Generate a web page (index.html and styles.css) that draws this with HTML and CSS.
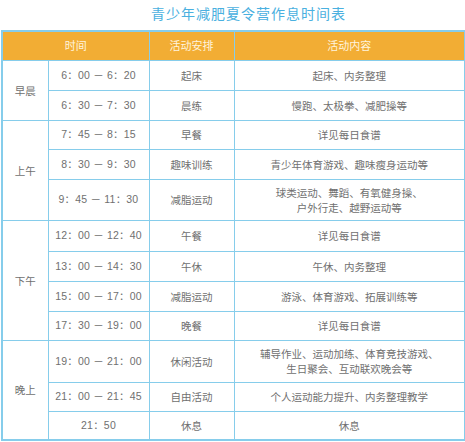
FILE: index.html
```html
<!DOCTYPE html>
<html lang="zh">
<head>
<meta charset="utf-8">
<link rel="stylesheet" href="styles.css">
</head>
<body>
<div class="page">
  <h1 class="title">青少年减肥夏令营作息时间表</h1>
  <table class="sched">
    <colgroup>
      <col class="c1"><col class="c2"><col class="c3"><col class="c4">
    </colgroup>
    <thead>
      <tr class="h"><th colspan="2">时间</th><th>活动安排</th><th>活动内容</th></tr>
    </thead>
    <tbody>
      <tr class="r30"><td rowspan="2" class="period">早晨</td><td class="time">6：00 － 6：20</td><td>起床</td><td>起床、内务整理</td></tr>
      <tr class="r30"><td class="time">6：30 － 7：30</td><td>晨练</td><td>慢跑、太极拳、减肥操等</td></tr>
      <tr class="r29"><td rowspan="3" class="period">上午</td><td class="time">7：45 － 8：15</td><td>早餐</td><td>详见每日食谱</td></tr>
      <tr class="r30"><td class="time">8：30 － 9：30</td><td>趣味训练</td><td>青少年体育游戏、趣味瘦身运动等</td></tr>
      <tr class="r41"><td class="time">9：45 － 11：30</td><td>减脂运动</td><td>球类运动、舞蹈、有氧健身操、<br>户外行走、越野运动等</td></tr>
      <tr class="r31"><td rowspan="4" class="period">下午</td><td class="time">12：00 － 12：40</td><td>午餐</td><td>详见每日食谱</td></tr>
      <tr class="r30"><td class="time">13：00 － 14：30</td><td>午休</td><td>午休、内务整理</td></tr>
      <tr class="r30"><td class="time">15：00 － 17：00</td><td>减脂运动</td><td>游泳、体育游戏、拓展训练等</td></tr>
      <tr class="r29"><td class="time">17：30 － 19：00</td><td>晚餐</td><td>详见每日食谱</td></tr>
      <tr class="r42"><td rowspan="3" class="period">晚上</td><td class="time">19：00 － 21：00</td><td>休闲活动</td><td>辅导作业、运动加练、体育竞技游戏、<br>生日聚会、互动联欢晚会等</td></tr>
      <tr class="r29"><td class="time">21：00 － 21：45</td><td>自由活动</td><td>个人运动能力提升、内务整理教学</td></tr>
      <tr class="r29"><td class="time">21：50</td><td>休息</td><td>休息</td></tr>
    </tbody>
  </table>
</div>
</body>
</html>
```

FILE: styles.css
```css
html, body {
  margin: 0;
  padding: 0;
  background: #ffffff;
}
.page {
  width: 465px;
  font-family: "Noto Sans CJK SC", "Noto Sans", sans-serif;
}
.title {
  margin: 0;
  padding-left: 32px;
  height: 30px;
  line-height: 26px;
  text-align: center;
  font-size: 14px;
  font-weight: 400;
  letter-spacing: 1px;
  color: #4ab0e0;
}
.sched {
  margin-left: 1px;
  width: 463px;
  border-collapse: collapse;
  table-layout: fixed;
  border: 2px solid #86cdeb;
}
.c1 { width: 46px; }
.c2 { width: 101px; }
.c3 { width: 85px; }
.c4 { width: 231px; }
.sched th, .sched td {
  border: 1.5px solid #86cdeb;
  padding: 0;
  text-align: center;
  vertical-align: middle;
  font-size: 10.5px;
  line-height: 15px;
  color: #707070;
  font-weight: 400;
}
.sched th {
  background: #f2ad34;
  color: #fff4de;
  font-size: 11px;
  border-color: #86cdeb;
}
.h { height: 29px; }
.r29 { height: 29px; }
.r30 { height: 30px; }
.r31 { height: 31px; }
.r41 { height: 41px; }
.r42 { height: 42px; }
.time {
  font-family: "Liberation Sans", "Noto Sans CJK SC", sans-serif;
  color: #9a9a9a;
  font-size: 11px;
  letter-spacing: 0.2px;
}
.period {
  color: #707070;
}
```
